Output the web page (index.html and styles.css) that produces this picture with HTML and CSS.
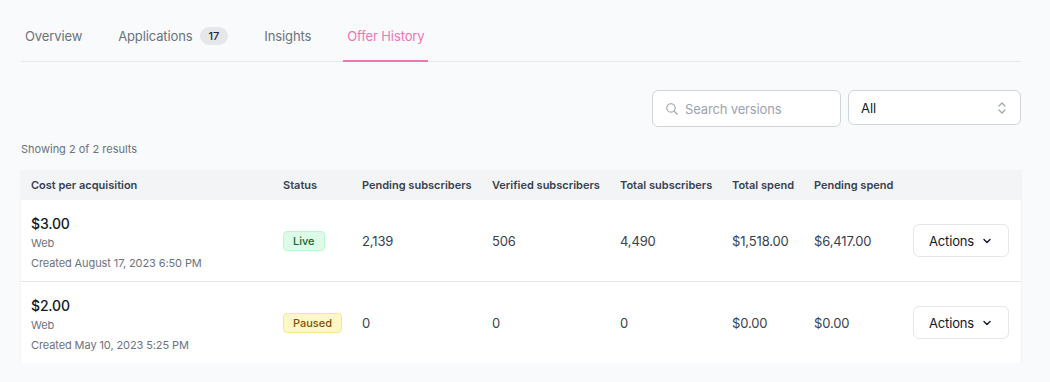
FILE: index.html
```html
<!DOCTYPE html>
<html lang="en">

<head>
    <meta charset="UTF-8" />
    <title>Offer History</title>
    <link rel="stylesheet" href="styles.css">
</head>

<body>
    <div class="page">
        <nav class="tabs">
            <a class="tab">Overview</a>
            <a class="tab">Applications <span class="count">17</span></a>
            <a class="tab">Insights</a>
            <a class="tab tab-active">Offer History</a>
        </nav>

        <div class="toolbar">
            <label class="search">
                <svg class="search-icon" width="14" height="14" viewBox="0 0 20 20" fill="none" stroke="currentColor" stroke-width="1.6" stroke-linecap="round">
                    <circle cx="8.5" cy="8.5" r="6" />
                    <path d="M13 13l4.5 4.5" />
                </svg>
                <input type="text" placeholder="Search versions" />
            </label>
            <div class="select">
                <span>All</span>
                <svg width="10" height="16" viewBox="0 0 10 16" fill="none" stroke="currentColor" stroke-width="1.2" stroke-linecap="round" stroke-linejoin="round">
                    <path d="M2 6l3-3 3 3" />
                    <path d="M2 10l3 3 3-3" />
                </svg>
            </div>
        </div>

        <p class="results">Showing 2 of 2 results</p>

        <table class="offers">
            <colgroup>
                <col style="width:252px">
                <col style="width:79px">
                <col style="width:130px">
                <col style="width:128px">
                <col style="width:112px">
                <col style="width:82px">
                <col style="width:99px">
                <col style="width:118px">
            </colgroup>
            <thead>
                <tr>
                    <th>Cost per acquisition</th>
                    <th>Status</th>
                    <th>Pending subscribers</th>
                    <th>Verified subscribers</th>
                    <th>Total subscribers</th>
                    <th>Total spend</th>
                    <th>Pending spend</th>
                    <th></th>
                </tr>
            </thead>
            <tbody>
                <tr>
                    <td class="cost">
                        <div class="amount">$3.00</div>
                        <div class="meta">Web</div>
                        <div class="meta">Created August 17, 2023 6:50 PM</div>
                    </td>
                    <td><span class="badge badge-live">Live</span></td>
                    <td>2,139</td>
                    <td>506</td>
                    <td>4,490</td>
                    <td>$1,518.00</td>
                    <td>$6,417.00</td>
                    <td class="actions">
                        <button class="btn"><span>Actions</span>
                            <svg width="8" height="8" viewBox="0 0 8 8" fill="none" stroke="currentColor" stroke-width="1.4" stroke-linecap="round" stroke-linejoin="round"><path d="M1 2.5l3 3 3-3" /></svg>
                        </button>
                    </td>
                </tr>
                <tr>
                    <td class="cost">
                        <div class="amount">$2.00</div>
                        <div class="meta">Web</div>
                        <div class="meta">Created May 10, 2023 5:25 PM</div>
                    </td>
                    <td><span class="badge badge-paused">Paused</span></td>
                    <td>0</td>
                    <td>0</td>
                    <td>0</td>
                    <td>$0.00</td>
                    <td>$0.00</td>
                    <td class="actions">
                        <button class="btn"><span>Actions</span>
                            <svg width="8" height="8" viewBox="0 0 8 8" fill="none" stroke="currentColor" stroke-width="1.4" stroke-linecap="round" stroke-linejoin="round"><path d="M1 2.5l3 3 3-3" /></svg>
                        </button>
                    </td>
                </tr>
            </tbody>
        </table>
    </div>
</body>

</html>
```

FILE: styles.css
```css
* {
    font-family: Inter, "Noto Sans", sans-serif;
    box-sizing: border-box;
}

body {
    margin: 0;
    padding: 0;
    background: #f9fafb;
    color: #374151;
}

.page {
    width: 1000px;
    margin-left: 21px;
    padding-top: 19px;
}

/* tabs */

.tabs {
    display: flex;
    gap: 28px;
    border-bottom: 1px solid #e5e7eb;
}

.tab {
    display: flex;
    align-items: center;
    gap: 7px;
    padding: 7px 4px 14px;
    font-size: 13px;
    line-height: 20px;
    letter-spacing: -0.12px;
    color: #6b7280;
    border-bottom: 2px solid transparent;
    margin-bottom: -1px;
}

.tab-active {
    color: #f472b6;
    border-bottom-color: #f472b6;
}

.count {
    display: inline-block;
    padding: 0 9px;
    border-radius: 10px;
    background: #e5e7eb;
    color: #1f2937;
    font-size: 11px;
    font-weight: 500;
    line-height: 18px;
    letter-spacing: 0;
}

/* search + filter */

.toolbar {
    display: flex;
    justify-content: flex-end;
    align-items: flex-start;
    gap: 7px;
    margin-top: 28px;
}

.search {
    display: flex;
    align-items: center;
    gap: 6px;
    width: 189px;
    height: 37px;
    padding: 0 12px;
    background: #fff;
    border: 1px solid #d1d5db;
    border-radius: 6px;
    color: #9ca3af;
}

.search input {
    border: none;
    outline: none;
    width: 140px;
    font-size: 13px;
    letter-spacing: -0.15px;
    color: #111827;
    background: transparent;
    padding: 0;
}

.search input::placeholder {
    color: #9ca3af;
}

.select {
    display: flex;
    align-items: center;
    justify-content: space-between;
    width: 173px;
    height: 35px;
    padding: 0 13px 0 12px;
    background: #fff;
    border: 1px solid #d1d5db;
    border-radius: 6px;
    font-size: 13px;
    color: #111827;
}

.select svg {
    color: #9ca3af;
}

.results {
    margin: 14px 0 13px;
    font-size: 11px;
    line-height: 16px;
    color: #6b7280;
}

/* table */

.offers {
    width: 1000px;
    table-layout: fixed;
    border-collapse: collapse;
    background: #fff;
    box-shadow: 0 1px 2px rgba(0, 0, 0, 0.08);
}

.offers th {
    height: 30px;
    padding: 0 10px;
    background: #f3f4f6;
    text-align: left;
    font-size: 11px;
    font-weight: 600;
    color: #374151;
    white-space: nowrap;
}

.offers td {
    padding: 0 10px;
    font-size: 13px;
    letter-spacing: -0.15px;
    color: #374151;
    vertical-align: middle;
    border-bottom: 1px solid #e5e7eb;
}

.offers tbody tr:last-child td {
    border-bottom: none;
}

.offers td.cost {
    padding: 14px 10px 8px;
}

.amount {
    font-size: 14px;
    font-weight: 500;
    line-height: 20px;
    color: #111827;
}

.meta {
    font-size: 11px;
    line-height: 19.5px;
    letter-spacing: -0.1px;
    color: #6b7280;
}

.badge {
    display: inline-block;
    padding: 0 9px;
    border-radius: 4px;
    font-size: 11px;
    font-weight: 500;
    line-height: 18px;
    letter-spacing: 0;
    border: 1px solid;
}

.badge-live {
    background: #dcfce7;
    border-color: #bbf7d0;
    color: #166534;
}

.badge-paused {
    background: #fef9c3;
    border-color: #fde68a;
    color: #854d0e;
}

.actions {
    text-align: right;
}

.btn {
    display: inline-flex;
    align-items: center;
    justify-content: space-between;
    width: 96px;
    height: 33px;
    padding: 0 17px 0 15px;
    background: #fff;
    border: 1px solid #e5e7eb;
    border-radius: 6px;
    font-size: 13px;
    letter-spacing: -0.15px;
    color: #111827;
    margin-right: 2px;
}
```
